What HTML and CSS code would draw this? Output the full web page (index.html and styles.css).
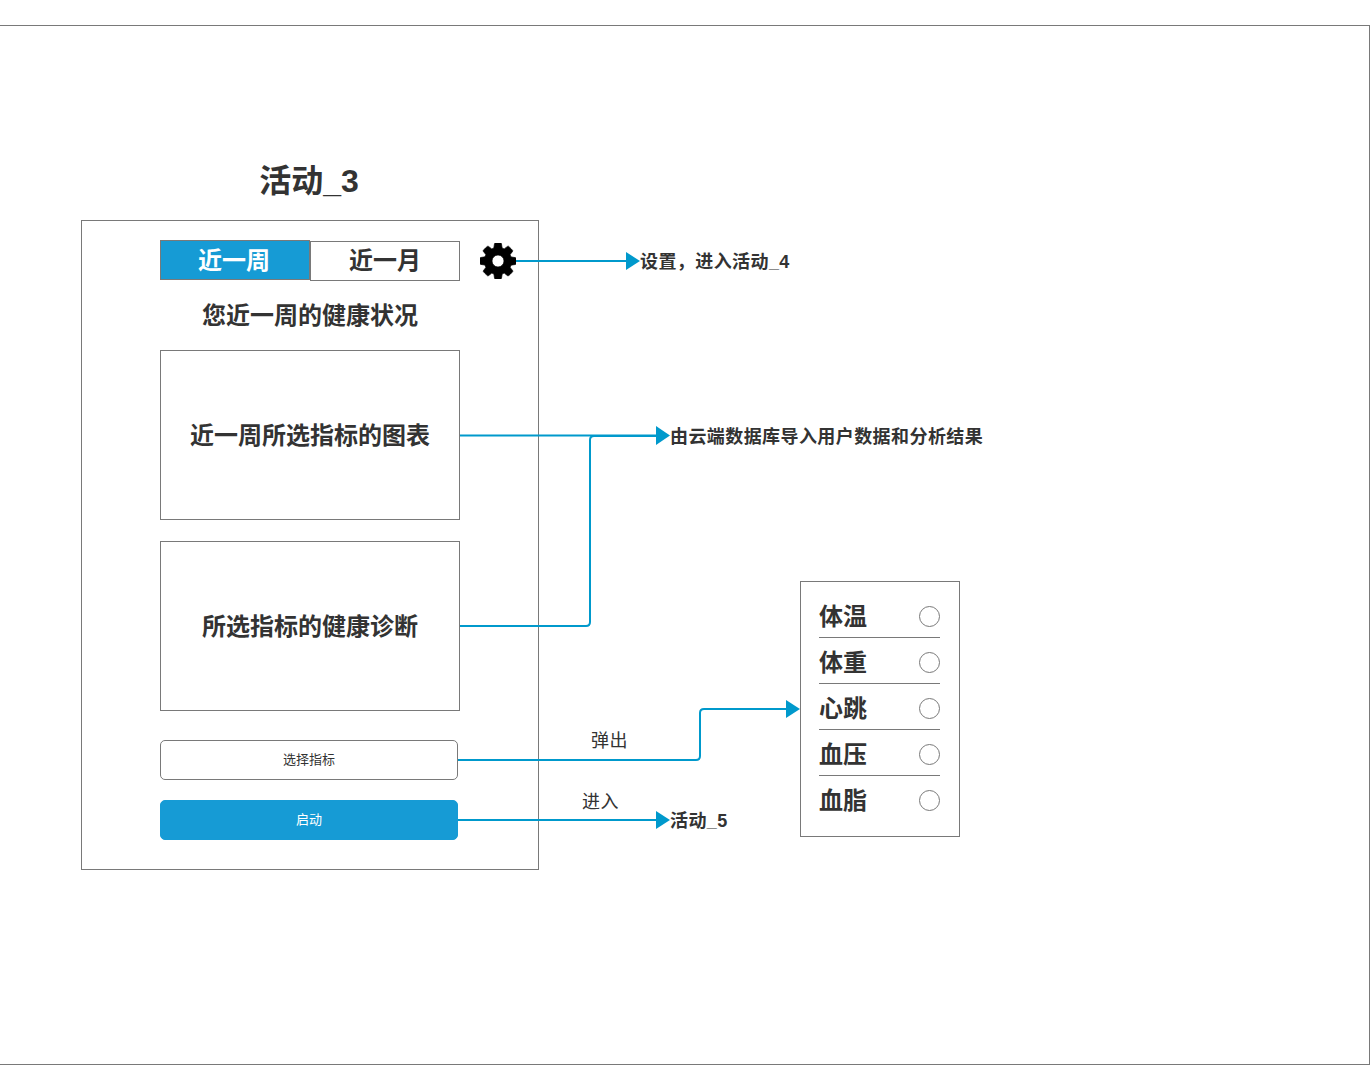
FILE: index.html
```html
<!DOCTYPE html>
<html lang="zh-CN">
<head>
    <meta charset="UTF-8">
    <title>活动_3</title>
    <link rel="stylesheet" href="styles.css">
</head>
<body>
    <div class="page">
        <div class="sheet"></div>

        <h1 class="title">活动_3</h1>

        <div class="phone">
            <div class="tabs">
                <div class="tab tab-active">近一周</div>
                <div class="tab tab-idle">近一月</div>
            </div>
            <h2 class="heading">您近一周的健康状况</h2>
            <div class="panel">近一周所选指标的图表</div>
            <div class="panel panel-second">所选指标的健康诊断</div>
            <div class="btn btn-outline">选择指标</div>
            <div class="btn btn-primary">启动</div>
        </div>

        <svg class="gear" viewBox="128 128 1536 1536">
            <path d="M1152 896q0-106-75-181t-181-75-181 75-75 181 75 181 181 75 181-75 75-181zm512-109v222q0 12-8 23t-20 13l-185 28q-19 54-39 91 35 50 107 138 10 12 10 25t-9 23q-27 37-99 108t-94 71q-12 0-26-9l-138-108q-44 23-91 38-16 136-29 186-7 28-36 28h-222q-14 0-24.5-8.5t-11.5-21.5l-28-184q-49-16-90-37l-141 107q-10 9-25 9-14 0-25-11-126-114-165-168-7-10-7-23 0-12 8-23 15-21 51-66.5t54-70.5q-27-50-41-99l-183-27q-13-2-21-12.5t-8-23.5v-222q0-12 8-23t19-13l186-28q14-46 39-92-40-57-107-138-10-12-10-24 0-10 9-23 26-36 98.5-107.5t94.5-71.5q13 0 26 10l138 107q44-23 91-38 16-136 29-186 7-28 36-28h222q14 0 24.5 8.5t11.5 21.5l28 184q49 16 90 37l142-107q9-9 24-9 13 0 25 10 129 119 165 170 7 8 7 22 0 12-8 23-15 21-51 66.5t-54 70.5q26 50 41 98l183 28q13 2 21 12.5t8 23.5z"/>
        </svg>

        <!-- connectors -->
        <svg class="wires" viewBox="0 0 1370 1065">
            <path class="wire" d="M516 261H627"/>
            <polygon class="head" points="626,252 640,261 626,270"/>
            <path class="wire" d="M460 435.500H657"/>
            <path class="wire" d="M460 626H586Q590 626 590 622V440Q590 436 594 436H657"/>
            <polygon class="head" points="656,426 670,435.500 656,445"/>
            <path class="wire" d="M458 760H696Q700 760 700 756V713Q700 709 704 709H787"/>
            <polygon class="head" points="786,700 800,709 786,718"/>
            <path class="wire" d="M458 820H657"/>
            <polygon class="head" points="656,811 670,820 656,829"/>
        </svg>

        <div class="note note-settings">设置，进入活动_4</div>
        <div class="note note-cloud">由云端数据库导入用户数据和分析结果</div>
        <div class="note note-next">活动_5</div>
        <div class="edge-label edge-popup">弹出</div>
        <div class="edge-label edge-enter">进入</div>

        <div class="picker">
            <div class="picker-row"><span>体温</span><i class="radio"></i></div>
            <div class="picker-row"><span>体重</span><i class="radio"></i></div>
            <div class="picker-row"><span>心跳</span><i class="radio"></i></div>
            <div class="picker-row"><span>血压</span><i class="radio"></i></div>
            <div class="picker-row"><span>血脂</span><i class="radio"></i></div>
        </div>
    </div>
</body>
</html>
```

FILE: styles.css
```css
* {
    box-sizing: border-box;
}
body {
    margin: 0;
    background: #fff;
    color: #333;
    font-family: "Liberation Sans", "Noto Sans CJK SC", sans-serif;
}
.page {
    position: relative;
    width: 1370px;
    height: 1065px;
    overflow: hidden;
}
.sheet {
    position: absolute;
    left: -1px;
    top: 25px;
    width: 1371px;
    height: 1040px;
    border: 1px solid #797979;
}
.title {
    position: absolute;
    left: 160px;
    top: 160px;
    width: 298px;
    margin: 0;
    font-size: 32px;
    line-height: 42px;
    font-weight: 700;
    text-align: center;
}
.phone {
    position: absolute;
    left: 81px;
    top: 220px;
    width: 458px;
    height: 650px;
    padding: 19px 0 0 78px;
    border: 1px solid #797979;
    display: flex;
    flex-direction: column;
    align-items: flex-start;
}
.tabs {
    display: flex;
    width: 300px;
    height: 41px;
    align-items: flex-start;
}
.tab {
    width: 150px;
    height: 40px;
    border: 1px solid #797979;
    font-size: 24px;
    font-weight: 700;
    line-height: 38px;
    text-align: center;
}
.tab-active {
    padding: 1px 2px 0 0;
    line-height: 37px;
    background: #169bd5;
    color: #fff;
}
.tab-idle {
    margin-top: 1px;
    background: #fff;
}
.heading {
    width: 300px;
    height: 69px;
    margin: 0;
    font-size: 24px;
    font-weight: 700;
    line-height: 69px;
    text-align: center;
}
.panel {
    display: flex;
    align-items: center;
    justify-content: center;
    width: 300px;
    height: 170px;
    padding-bottom: 4px;
    border: 1px solid #797979;
    font-size: 24px;
    font-weight: 700;
}
.panel-second {
    margin-top: 21px;
}
.btn {
    width: 298px;
    height: 40px;
    border-radius: 5px;
    font-size: 13px;
    line-height: 38px;
    text-align: center;
}
.btn-outline {
    margin-top: 29px;
    border: 1px solid #797979;
    background: #fff;
}
.btn-primary {
    margin-top: 20px;
    border: 1px solid #169bd5;
    background: #169bd5;
    color: #fff;
}
.gear {
    position: absolute;
    left: 480px;
    top: 243px;
    width: 36px;
    height: 36px;
    stroke: #000;
    stroke-width: 30;
}
.wires {
    position: absolute;
    left: 0;
    top: 0;
    width: 1370px;
    height: 1065px;
    pointer-events: none;
}
.wire {
    fill: none;
    stroke: #0099cc;
    stroke-width: 2;
}
.head {
    fill: #0099cc;
}
.note {
    position: absolute;
    font-size: 18px;
    font-weight: 700;
    line-height: 24px;
    letter-spacing: 0.42px;
    white-space: nowrap;
}
.note-settings {
    left: 640px;
    top: 250px;
}
.note-cloud {
    left: 670px;
    top: 425px;
}
.note-next {
    left: 670px;
    top: 809px;
}
.edge-label {
    position: absolute;
    font-size: 18px;
    line-height: 24px;
    letter-spacing: 0.5px;
    white-space: nowrap;
}
.edge-popup {
    left: 591px;
    top: 729px;
}
.edge-enter {
    left: 582px;
    top: 790px;
}
.picker {
    position: absolute;
    left: 800px;
    top: 581px;
    width: 160px;
    height: 256px;
    padding: 10px 19px 0 18px;
    border: 1px solid #797979;
}
.picker-row {
    display: flex;
    align-items: center;
    justify-content: space-between;
    height: 46px;
    border-bottom: 1px solid #797979;
    font-size: 24px;
    font-weight: 700;
}
.picker-row:last-child {
    height: 44px;
    border-bottom: none;
}
.radio {
    width: 21px;
    height: 21px;
    margin-top: 4px;
    border: 1px solid #797979;
    border-radius: 50%;
}
```
